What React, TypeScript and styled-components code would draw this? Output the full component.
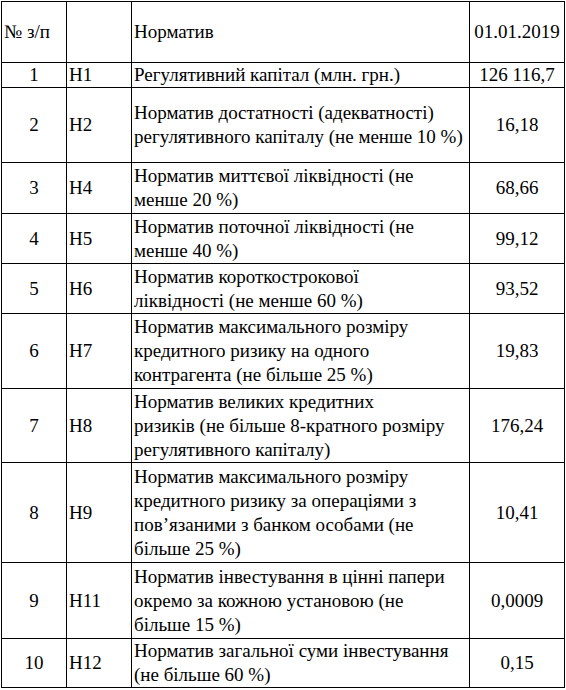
import React from "react";
import styled, { createGlobalStyle } from "styled-components";

type Row = {
  no: string;
  code: string;
  lines: string[];
  value: string;
  height: number;
};

const rows: Row[] = [
  { no: "1", code: "Н1", lines: ["Регулятивний капітал (млн. грн.)"], value: "126 116,7", height: 25 },
  {
    no: "2",
    code: "Н2",
    lines: ["Норматив достатності (адекватності)", "регулятивного капіталу (не менше 10 %)"],
    value: "16,18",
    height: 75,
  },
  { no: "3", code: "Н4", lines: ["Норматив миттєвої ліквідності (не", "менше 20 %)"], value: "68,66", height: 51 },
  { no: "4", code: "Н5", lines: ["Норматив поточної ліквідності (не", "менше 40 %)"], value: "99,12", height: 50 },
  { no: "5", code: "Н6", lines: ["Норматив короткострокової", "ліквідності (не менше 60 %)"], value: "93,52", height: 50 },
  {
    no: "6",
    code: "Н7",
    lines: ["Норматив максимального розміру", "кредитного ризику на одного", "контрагента (не більше 25 %)"],
    value: "19,83",
    height: 75,
  },
  {
    no: "7",
    code: "Н8",
    lines: ["Норматив великих кредитних", "ризиків (не більше 8-кратного розміру", "регулятивного капіталу)"],
    value: "176,24",
    height: 74,
  },
  {
    no: "8",
    code: "Н9",
    lines: [
      "Норматив максимального розміру",
      "кредитного ризику за операціями з",
      "пов’язаними з банком особами (не",
      "більше 25 %)",
    ],
    value: "10,41",
    height: 100,
  },
  {
    no: "9",
    code: "Н11",
    lines: ["Норматив інвестування в цінні папери", "окремо за кожною установою (не", "більше 15 %)"],
    value: "0,0009",
    height: 76,
  },
  { no: "10", code: "Н12", lines: ["Норматив загальної суми інвестування", "(не більше 60 %)"], value: "0,15", height: 49 },
];

export default function App() {
  return (
    <>
      <GlobalStyle />
      <STable>
        <SRow $height={61}>
          <SCell>№ з/п</SCell>
          <SCell />
          <SCell>Норматив</SCell>
          <SCell $center>01.01.2019</SCell>
        </SRow>
        {rows.map((row) => (
          <SRow key={row.no} $height={row.height}>
            <SCell $center>{row.no}</SCell>
            <SCell>{row.code}</SCell>
            <SCell>
              {row.lines.map((line) => (
                <SLine key={line}>{line}</SLine>
              ))}
            </SCell>
            <SCell $center>{row.value}</SCell>
          </SRow>
        ))}
      </STable>
    </>
  );
}

const GlobalStyle = createGlobalStyle`
  body {
    margin: 0;
    background: #fff;
    color: #000;
    font-family: "Liberation Serif", "Times New Roman", serif;
  }
`;

const STable = styled.div`
  margin: 1px 0 0 1px;
  width: 564px;
  box-sizing: border-box;
  border-top: 1px solid #000;
  border-left: 1px solid #000;
  font-family: "Liberation Serif", "Times New Roman", serif;
  font-size: 19px;
  line-height: 24px;
  color: #000;
`;

const SRow = styled.div<{ $height: number }>`
  display: grid;
  grid-template-columns: 65px 65px 338px 95px;
  height: ${(props) => props.$height}px;
`;

const SCell = styled.div<{ $center?: boolean }>`
  box-sizing: border-box;
  display: flex;
  flex-direction: column;
  justify-content: center;
  align-items: ${(props) => (props.$center ? "center" : "flex-start")};
  padding: 0 2px;
  border-right: 1px solid #000;
  border-bottom: 1px solid #000;
  white-space: nowrap;
`;

const SLine = styled.span`
  display: block;
`;
